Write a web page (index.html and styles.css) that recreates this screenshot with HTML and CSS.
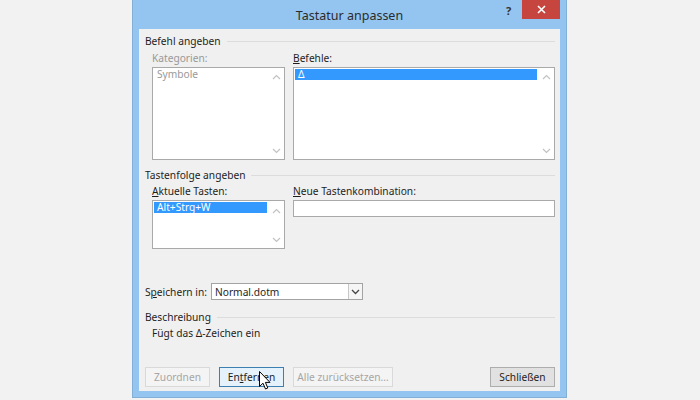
FILE: index.html
```html
<!DOCTYPE html>
<html lang="de">
<head>
<meta charset="utf-8">
<title>Tastatur anpassen</title>
<link rel="stylesheet" href="styles.css">
</head>
<body>
<div class="window">
  <div class="titlebar">
    <span class="title">Tastatur anpassen</span>
    <span class="help">?</span>
    <span class="close"><svg width="9" height="9" viewBox="0 0 9 9"><path d="M1 1 L8 8 M8 1 L1 8" stroke="#fff" stroke-width="1.6"/></svg></span>
  </div>
  <div class="content">
    <div class="section"><span>Befehl angeben</span><span class="rule"></span></div>
    <div class="cols top">
      <div class="col">
        <div class="label disabled">Kategorien:</div>
        <div class="listbox tall">
          <div class="items"><div class="item disabled">Symbole</div></div>
          <div class="scroll">
            <svg width="9" height="6" viewBox="0 0 9 6"><path d="M1 5 L4.5 1.5 L8 5" fill="none" stroke="#c2c2c2" stroke-width="1.2"/></svg>
            <svg width="9" height="6" viewBox="0 0 9 6"><path d="M1 1 L4.5 4.5 L8 1" fill="none" stroke="#c2c2c2" stroke-width="1.2"/></svg>
          </div>
        </div>
      </div>
      <div class="col">
        <div class="label"><u>B</u>efehle:</div>
        <div class="listbox tall">
          <div class="items"><div class="item selected">Δ</div></div>
          <div class="scroll">
            <svg width="9" height="6" viewBox="0 0 9 6"><path d="M1 5 L4.5 1.5 L8 5" fill="none" stroke="#c2c2c2" stroke-width="1.2"/></svg>
            <svg width="9" height="6" viewBox="0 0 9 6"><path d="M1 1 L4.5 4.5 L8 1" fill="none" stroke="#c2c2c2" stroke-width="1.2"/></svg>
          </div>
        </div>
      </div>
    </div>
    <div class="section s2"><span>Tastenfolge angeben</span><span class="rule"></span></div>
    <div class="cols mid">
      <div class="col">
        <div class="label"><u>A</u>ktuelle Tasten:</div>
        <div class="listbox short">
          <div class="items"><div class="item selected">Alt+Strg+W</div></div>
          <div class="scroll">
            <svg width="9" height="6" viewBox="0 0 9 6"><path d="M1 5 L4.5 1.5 L8 5" fill="none" stroke="#c2c2c2" stroke-width="1.2"/></svg>
            <svg width="9" height="6" viewBox="0 0 9 6"><path d="M1 1 L4.5 4.5 L8 1" fill="none" stroke="#c2c2c2" stroke-width="1.2"/></svg>
          </div>
        </div>
      </div>
      <div class="col">
        <div class="label"><u>N</u>eue Tastenkombination:</div>
        <div class="input"></div>
      </div>
    </div>
    <div class="save">
      <span class="save-label">S<u>p</u>eichern in:</span>
      <div class="combo">
        <span class="combo-text">Normal.dotm</span>
        <span class="combo-btn"><svg width="9" height="6" viewBox="0 0 9 6"><path d="M1 1 L4.5 4.5 L8 1" fill="none" stroke="#444" stroke-width="1.3"/></svg></span>
      </div>
    </div>
    <div class="section s3"><span>Beschreibung</span><span class="rule"></span></div>
    <div class="desc">Fügt das Δ-Zeichen ein</div>
    <div class="buttons">
      <span class="btn disabled">Zuordnen</span>
      <span class="btn hover">En<u>t</u>fernen</span>
      <span class="btn disabled wide">Alle zurücksetzen...</span>
      <span class="spacer"></span>
      <span class="btn">Schließen</span>
    </div>
  </div>
</div>
<svg class="cursor" width="13" height="20" viewBox="0 0 13 20"><path d="M0.5 0.5 L0.5 15.5 L4 12.2 L6.5 18 L8.8 17 L6.4 11.4 L11 11.4 Z" fill="#fff" stroke="#000" stroke-width="1" stroke-linejoin="round"/></svg>
</body>
</html>
```
FILE: styles.css
```css
html, body {
  margin: 0;
  padding: 0;
}
body {
  background: #f2f2f2;
  width: 700px;
  height: 400px;
  overflow: hidden;
  position: relative;
  font-family: "Noto Sans", "Open Sans", sans-serif;
  font-size: 10.2px;
  color: #1e1e1e;
}
u { text-decoration: underline; text-underline-offset: 1px; }
.window {
  margin-left: 132px;
  width: 433px;
  height: 397px;
  background: #94c5f0;
  border: 1px solid #83aed6;
  border-top: none;
  display: flex;
  flex-direction: column;
}
.titlebar {
  flex: 0 0 29px;
  height: 29px;
  position: relative;
  display: flex;
  justify-content: center;
  align-items: center;
}
.title {
  font-size: 12.5px;
  color: #2b2b2b;
  margin-top: 1px;
}
.help {
  position: absolute;
  left: 373px;
  top: 3px;
  font-size: 11px;
  font-weight: bold;
  color: #333;
}
.close {
  position: absolute;
  left: 389px;
  top: 0;
  width: 38px;
  height: 19px;
  background: #c7453f;
  display: flex;
  align-items: center;
  justify-content: center;
}
.content {
  margin: 0 6px 6px 6px;
  flex: 1 1 auto;
  min-height: 0;
  overflow: hidden;
  background: #f0f0f0;
  padding: 5px 5px 0 6px;
}
.section {
  height: 14px;
  line-height: 14px;
  display: flex;
  align-items: center;
  gap: 6px;
  white-space: nowrap;
}
.rule {
  flex: 1;
  height: 1px;
  background: #dcdcdc;
}
.cols {
  display: grid;
  grid-template-columns: 133px 262px;
  column-gap: 8px;
  padding-left: 7px;
}
.cols.top { margin-top: 3px; }
.label {
  height: 14px;
  line-height: 14px;
  margin-bottom: 2px;
  white-space: nowrap;
}
.disabled { color: #999; }
.listbox {
  background: #fff;
  border: 1px solid #a9a9a9;
  display: flex;
  box-sizing: border-box;
}
.listbox.tall { height: 93px; }
.listbox.short { height: 49px; }
.items {
  flex: 1;
  padding: 1px 1px 0 1px;
}
.item {
  height: 11px;
  line-height: 11px;
  padding-left: 3px;
}
.item.selected {
  background: #3399ff;
  color: #fff;
}
.scroll {
  width: 16px;
  display: flex;
  flex-direction: column;
  justify-content: space-between;
  align-items: center;
  padding: 6px 0 5px;
}
.listbox.short .scroll { padding: 7px 0 5px; }
.section.s2 { margin-top: 8px; }
.cols.mid { margin-top: 2px; }
.input {
  height: 17px;
  box-sizing: border-box;
  background: #fff;
  border: 1px solid #a9a9a9;
}
.save {
  margin-top: 34px;
  display: flex;
  align-items: center;
  gap: 8px;
  white-space: nowrap;
}
.save-label {
  width: 58px;
}
.combo {
  width: 152px;
  height: 17px;
  box-sizing: border-box;
  background: #fff;
  border: 1px solid #a3a3a3;
  display: flex;
  align-items: center;
}
.combo-text {
  flex: 1;
  padding-left: 3px;
}
.combo-btn {
  width: 13px;
  height: 15px;
  border-left: 1px solid #c8c8c8;
  background: #f5f5f5;
  display: flex;
  align-items: center;
  justify-content: center;
}
.section.s3 { margin-top: 10px; }
.desc {
  margin-top: 2px;
  padding-left: 7px;
  height: 14px;
  line-height: 14px;
}
.buttons {
  margin-top: 27px;
  display: flex;
  gap: 9px;
  white-space: nowrap;
}
.btn {
  width: 65px;
  height: 20px;
  box-sizing: border-box;
  border: 1px solid #adadad;
  background: #e1e1e1;
  display: flex;
  align-items: center;
  justify-content: center;
}
.btn.disabled {
  background: #f4f4f4;
  border-color: #d9d9d9;
  color: #a6a6a6;
}
.btn.hover {
  background: #e5f1fb;
  border-color: #3c7fb1;
}
.btn.wide { width: 100px; }
.spacer { flex: 1; }
.cursor {
  position: absolute;
  left: 259px;
  top: 371px;
}
```
